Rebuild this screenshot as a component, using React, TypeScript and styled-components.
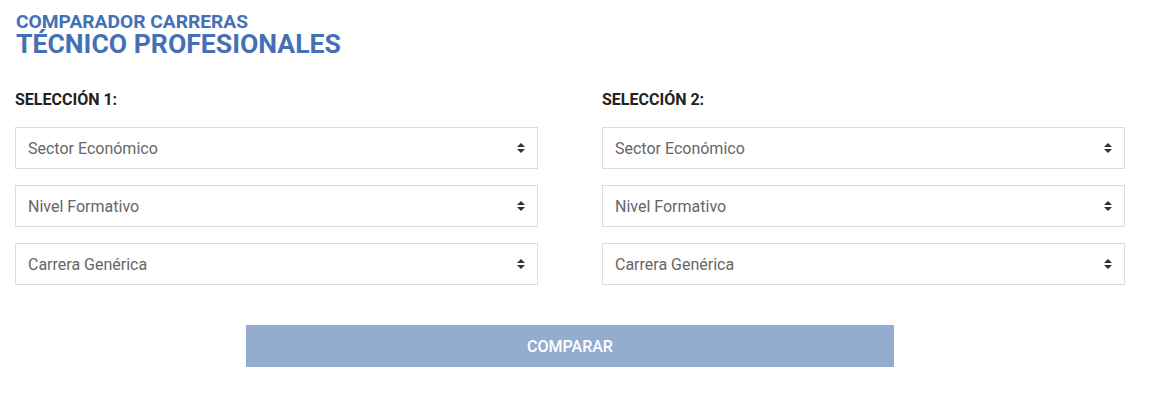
import React from 'react';
import styled, { createGlobalStyle } from 'styled-components';

const GlobalStyle = createGlobalStyle`
  body {
    margin: 0;
    background: #ffffff;
    font-family: Roboto, "Liberation Sans", sans-serif;
  }
`;

const Page = styled.div`
  width: 1110px;
  padding: 12px 0 0 15px;
`;

const Heading = styled.h1`
  margin: 0 0 0 1px;
  color: #4470b6;
  font-weight: 700;
  text-transform: uppercase;
`;

const HeadingSmall = styled.span`
  display: block;
  font-size: 19.2px;
  line-height: 20px;
`;

const HeadingLarge = styled.span`
  display: block;
  font-size: 26.6px;
  line-height: 24px;
`;

const Columns = styled.div`
  display: grid;
  grid-template-columns: 1fr 1fr;
  column-gap: 64px;
  margin-top: 34px;
`;

const Column = styled.div`
  display: flex;
  flex-direction: column;
  gap: 16px;
`;

const Label = styled.div`
  font-size: 16px;
  font-weight: 700;
  color: #222222;
  line-height: 20px;
  margin-bottom: 1px;
`;

const SelectWrap = styled.div`
  position: relative;
  height: 42px;
`;

const Select = styled.select`
  appearance: none;
  -webkit-appearance: none;
  width: 100%;
  height: 42px;
  padding: 0 36px 0 12px;
  border: 1px solid #dcdcdc;
  border-radius: 0;
  background: #ffffff;
  color: #666666;
  font-family: Roboto, "Liberation Sans", sans-serif;
  font-size: 16px;
  outline: none;
`;

const Arrows = styled.svg`
  position: absolute;
  right: 13px;
  top: 16px;
  pointer-events: none;
`;

const ButtonRow = styled.div`
  display: flex;
  justify-content: center;
  margin-top: 40px;
`;

const CompareButton = styled.button`
  width: 648px;
  height: 42px;
  border: none;
  background: #93add1;
  color: #ffffff;
  font-family: Roboto, "Liberation Sans", sans-serif;
  font-size: 16px;
  font-weight: 500;
  text-transform: uppercase;
  cursor: not-allowed;
`;

const fields = ['Sector Económico', 'Nivel Formativo', 'Carrera Genérica'];

const SortArrows = () => (
  <Arrows width="8" height="10" viewBox="0 0 8 10">
    <path d="M4 0 L8 4 L0 4 Z" fill="#333" />
    <path d="M0 6 L8 6 L4 10 Z" fill="#333" />
  </Arrows>
);

const Selection: React.FC<{ n: number }> = ({ n }) => (
  <Column>
    <Label>SELECCIÓN {n}:</Label>
    {fields.map(f => (
      <SelectWrap key={f}>
        <Select defaultValue="">
          <option value="">{f}</option>
        </Select>
        <SortArrows />
      </SelectWrap>
    ))}
  </Column>
);

export default function App() {
  return (
    <>
      <GlobalStyle />
      <Page>
        <Heading>
          <HeadingSmall>Comparador carreras</HeadingSmall>
          <HeadingLarge>Técnico profesionales</HeadingLarge>
        </Heading>
        <Columns>
          <Selection n={1} />
          <Selection n={2} />
        </Columns>
        <ButtonRow>
          <CompareButton disabled>Comparar</CompareButton>
        </ButtonRow>
      </Page>
    </>
  );
}
